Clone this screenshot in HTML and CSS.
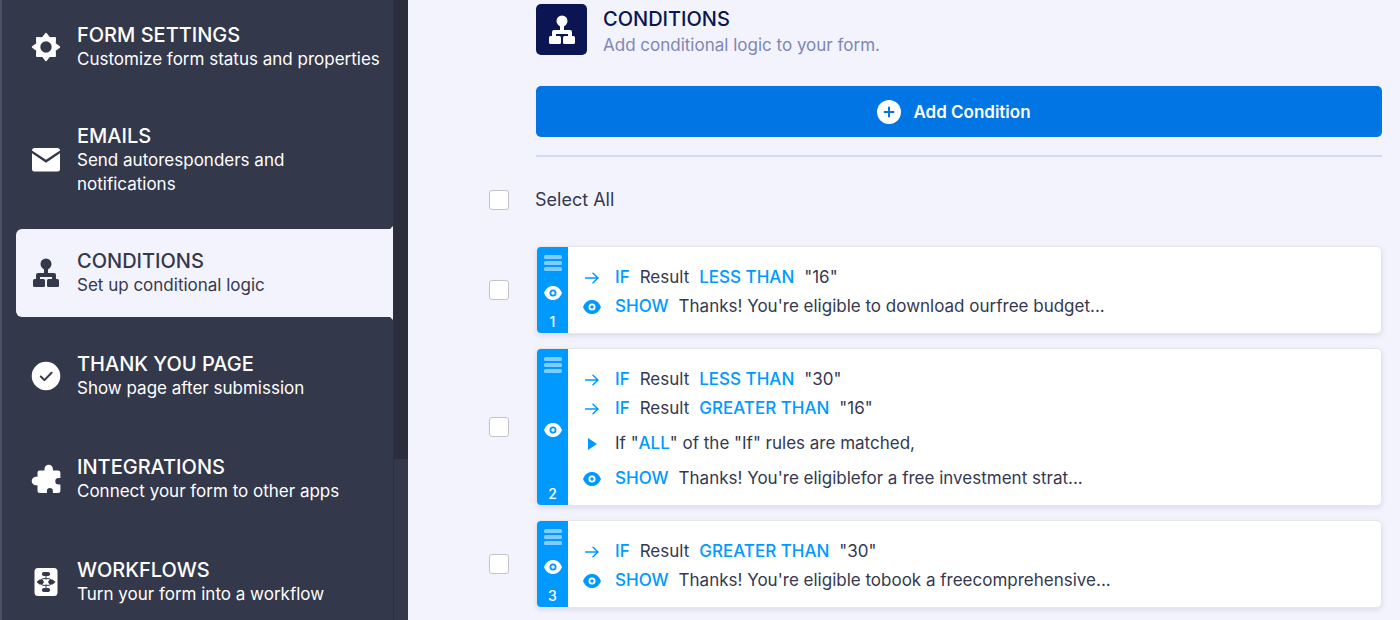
FILE: index.html
```
<!DOCTYPE html>
<html lang="en">
<head>
    <meta charset="UTF-8">
    <meta name="viewport" content="width=device-width, initial-scale=1.0">
    <title>Conditions</title>
    <link rel="stylesheet" href="styles.css">
</head>
<body>
    <!-- Shared icons -->
    <svg class="sprite" aria-hidden="true">
        <symbol id="icon-tree" viewBox="0 0 28 30">
            <circle cx="14" cy="6" r="5.5"/>
            <path d="M12 10h4v5h6a2 2 0 0 1 2 2v5h-4v-3H8v3H4v-5a2 2 0 0 1 2-2h6z"/>
            <rect x="1" y="21" width="12" height="8" rx="1.5"/>
            <rect x="15" y="21" width="12" height="8" rx="1.5"/>
        </symbol>
        <symbol id="icon-eye" viewBox="0 0 18 14">
            <path fill-rule="evenodd" d="M9 0C5 0 1.800 2.500 0 7c1.800 4.500 5 7 9 7s7.200-2.500 9-7c-1.800-4.500-5-7-9-7zm0 3.500a3.500 3.500 0 1 1 0 7 3.500 3.500 0 0 1 0-7z"/>
            <circle cx="9" cy="7" r="1.700"/>
        </symbol>
        <symbol id="icon-arrow" viewBox="0 0 14 12">
            <path d="M0.500 6h12M8 1.200l5 4.800-5 4.800" fill="none" stroke="currentColor" stroke-width="1.500" stroke-linecap="round" stroke-linejoin="round"/>
        </symbol>
        <symbol id="icon-menu" viewBox="0 0 18 16">
            <rect width="18" height="4" rx="1.500"/>
            <rect y="6" width="18" height="4" rx="1.500"/>
            <rect y="12" width="18" height="4" rx="1.500"/>
        </symbol>
    </svg>

    <div class="layout">
        <aside class="sidebar">
            <nav class="menu">
                <a class="menu-item" href="#settings">
                    <svg class="menu-icon" viewBox="0 0 30 30">
                        <path fill-rule="evenodd" d="M15 1.800L18.300 6.200L24 6L23.800 11.700L28.200 15L23.800 18.300L24 24L18.300 23.800L15 28.200L11.700 23.800L6 24L6.200 18.300L1.800 15L6.200 11.700L6 6L11.700 6.200zM15 8.300a6.700 6.700 0 1 0 0 13.400 6.700 6.700 0 0 0 0-13.400z" stroke="currentColor" stroke-width="2" stroke-linejoin="round"/>
                    </svg>
                    <span class="menu-text">
                        <span class="menu-title">FORM SETTINGS</span>
                        <span class="menu-desc">Customize form status and properties</span>
                    </span>
                </a>
                <a class="menu-item" href="#emails">
                    <svg class="menu-icon" viewBox="0 0 30 30">
                        <path d="M1 5.500C1 4 2 3 3.500 3h23C28 3 29 4 29 5.500L15 14.800z"/>
                        <path d="M1 8.200l14 9.500 14-9.500V24a2.500 2.500 0 0 1-2.500 2.500h-23A2.500 2.500 0 0 1 1 24z"/>
                    </svg>
                    <span class="menu-text">
                        <span class="menu-title">EMAILS</span>
                        <span class="menu-desc">Send autoresponders and notifications</span>
                    </span>
                </a>
                <a class="menu-item active" href="#conditions" aria-current="page">
                    <svg class="menu-icon"><use href="#icon-tree"/></svg>
                    <span class="menu-text">
                        <span class="menu-title">CONDITIONS</span>
                        <span class="menu-desc">Set up conditional logic</span>
                    </span>
                </a>
                <a class="menu-item" href="#thankyou">
                    <svg class="menu-icon" viewBox="0 0 30 30">
                        <circle cx="15" cy="15" r="14.300"/>
                        <path class="cut-line" d="M9.800 15.500l3.600 3.600 7.200-7.400"/>
                    </svg>
                    <span class="menu-text">
                        <span class="menu-title">THANK YOU PAGE</span>
                        <span class="menu-desc">Show page after submission</span>
                    </span>
                </a>
                <a class="menu-item" href="#integrations">
                    <svg class="menu-icon" viewBox="0 0 30 30">
                        <path d="M8.500 6.500h5V5a4.200 4.200 0 0 1 8.400 0v1.500h5a2.500 2.500 0 0 1 2.500 2.500v5h-1.800a3.300 3.300 0 0 0 0 6.600h1.800v5.900a2.500 2.500 0 0 1-2.500 2.500h-5v-2a3 3 0 0 0-6 0v2H9a2.500 2.500 0 0 1-2.500-2.500v-5.200H5A4.300 4.300 0 0 1 5 12.700h1.500V8.500a2 2 0 0 1 2-2z"/>
                    </svg>
                    <span class="menu-text">
                        <span class="menu-title">INTEGRATIONS</span>
                        <span class="menu-desc">Connect your form to other apps</span>
                    </span>
                </a>
                <a class="menu-item" href="#workflows">
                    <svg class="menu-icon" viewBox="0 0 30 30">
                        <rect x="3.500" y="1" width="23" height="28" rx="3.500"/>
                        <g class="cut">
                            <rect x="11" y="5" width="8" height="4" rx="1.800"/>
                            <rect x="11" y="21" width="8" height="4" rx="1.800"/>
                            <path d="M5.500 15l3-2.400h3l1.500 2.400-1.500 2.400h-3zM24.500 15l-3-2.400h-3L17 15l1.500 2.400h3z"/>
                        </g>
                        <path class="cut-thin" d="M15 9v3M15 18v3M10.500 12.500l1-.8h7l1 .8M10.500 17.500l1 .8h7l1-.8"/>
                    </svg>
                    <span class="menu-text">
                        <span class="menu-title">WORKFLOWS</span>
                        <span class="menu-desc">Turn your form into a workflow</span>
                    </span>
                </a>
            </nav>
            <div class="scroll-track"><div class="scroll-thumb"></div></div>
        </aside>

        <main class="content">
            <header class="page-header">
                <span class="page-icon"><svg><use href="#icon-tree"/></svg></span>
                <div>
                    <h1>CONDITIONS</h1>
                    <p>Add conditional logic to your form.</p>
                </div>
            </header>

            <div class="add-area">
                <button class="add-button" type="button">
                    <svg viewBox="0 0 24 24">
                        <circle cx="12" cy="12" r="12"/>
                        <path d="M12 7.500v9M7.500 12h9" stroke="#0075e3" stroke-width="2" stroke-linecap="round"/>
                    </svg>
                    Add Condition
                </button>
            </div>

            <div class="select-all">
                <input type="checkbox" id="selectAll">
                <label for="selectAll">Select All</label>
            </div>

            <ul class="conditions">
                <li class="condition">
                    <input type="checkbox" aria-label="Condition 1">
                    <div class="card">
                        <div class="handle">
                            <svg class="handle-menu"><use href="#icon-menu"/></svg>
                            <svg class="eye"><use href="#icon-eye"/></svg>
                            <span>1</span>
                        </div>
                        <div class="rules">
                            <div class="rule"><svg class="arrow"><use href="#icon-arrow"/></svg><b>IF</b><span>Result</span><b>LESS THAN</b><span>"16"</span></div>
                            <div class="rule"><svg class="eye"><use href="#icon-eye"/></svg><b>SHOW</b><span>Thanks! You're eligible to download ourfree budget...</span></div>
                        </div>
                    </div>
                </li>
                <li class="condition">
                    <input type="checkbox" aria-label="Condition 2">
                    <div class="card">
                        <div class="handle">
                            <svg class="handle-menu"><use href="#icon-menu"/></svg>
                            <svg class="eye"><use href="#icon-eye"/></svg>
                            <span>2</span>
                        </div>
                        <div class="rules">
                            <div class="rule"><svg class="arrow"><use href="#icon-arrow"/></svg><b>IF</b><span>Result</span><b>LESS THAN</b><span>"30"</span></div>
                            <div class="rule"><svg class="arrow"><use href="#icon-arrow"/></svg><b>IF</b><span>Result</span><b>GREATER THAN</b><span>"16"</span></div>
                            <div class="rule match"><svg class="play" viewBox="0 0 9 12"><path d="M0 0l9 6-9 6z"/></svg><span>If "<b>ALL</b>" of the "If" rules are matched,</span></div>
                            <div class="rule"><svg class="eye"><use href="#icon-eye"/></svg><b>SHOW</b><span>Thanks! You're eligiblefor a free investment strat...</span></div>
                        </div>
                    </div>
                </li>
                <li class="condition">
                    <input type="checkbox" aria-label="Condition 3">
                    <div class="card">
                        <div class="handle">
                            <svg class="handle-menu"><use href="#icon-menu"/></svg>
                            <svg class="eye"><use href="#icon-eye"/></svg>
                            <span>3</span>
                        </div>
                        <div class="rules">
                            <div class="rule"><svg class="arrow"><use href="#icon-arrow"/></svg><b>IF</b><span>Result</span><b>GREATER THAN</b><span>"30"</span></div>
                            <div class="rule"><svg class="eye"><use href="#icon-eye"/></svg><b>SHOW</b><span>Thanks! You're eligible tobook a freecomprehensive...</span></div>
                        </div>
                    </div>
                </li>
            </ul>
        </main>
    </div>
</body>
</html>
```
FILE: styles.css
```
* {
    box-sizing: border-box;
}
body {
    margin: 0;
    font-family: Inter, "Liberation Sans", sans-serif;
    background-color: #f3f3fe;
    color: #343850;
}
svg {
    fill: currentColor;
    flex-shrink: 0;
}
.sprite {
    display: none;
}
.layout {
    display: grid;
    grid-template-columns: 408px 1fr;
    height: 100vh;
    overflow: hidden;
}

/* Sidebar */
.sidebar {
    display: flex;
    min-height: 0;
    background-color: #33384b;
    border-left: 2px solid #4b5164;
}
.menu {
    flex: 1;
    display: flex;
    flex-direction: column;
    gap: 15px;
    padding: 3px 0 0 14px;
}
.menu-item {
    position: relative;
    display: flex;
    flex-shrink: 0;
    align-items: center;
    gap: 16px;
    min-height: 88px;
    padding: 18px 9px 18px 15px;
    color: #fff;
    text-decoration: none;
    border-radius: 6px 0 0 6px;
}
.menu-icon {
    width: 30px;
    height: 30px;
}
.menu-text {
    flex: 1;
}
.menu-title, .menu-desc {
    display: block;
    line-height: 24px;
}
.menu-title {
    font-size: 20px;
    font-weight: 500;
}
.menu-desc {
    font-size: 17px;
}
.menu-item.active {
    background-color: #f3f3fe;
    color: #33384b;
}
/* little flares where the active tab meets the edge */
.menu-item.active::before, .menu-item.active::after {
    content: "";
    position: absolute;
    right: 0;
    border-left: 3px solid transparent;
}
.menu-item.active::before {
    bottom: 100%;
    border-bottom: 3px solid #f3f3fe;
}
.menu-item.active::after {
    top: 100%;
    border-top: 3px solid #f3f3fe;
}
.cut {
    fill: #33384b;
}
.cut-line, .cut-thin {
    fill: none;
    stroke: #33384b;
    stroke-width: 2;
    stroke-linecap: round;
    stroke-linejoin: round;
}
.cut-thin {
    stroke-width: 1;
}
.scroll-track {
    width: 15px;
    border-left: 1px solid #2d3042;
}
.scroll-thumb {
    height: 74%;
    background-color: #2b2d3c;
}

/* Content */
.content {
    padding: 4px 18px 0 81px;
}
.page-header {
    display: flex;
    gap: 16px;
    margin-left: 47px;
}
.page-icon {
    display: flex;
    align-items: center;
    justify-content: center;
    width: 51px;
    height: 51px;
    border-radius: 5px;
    background-color: #0a1551;
    color: #fff;
}
.page-icon svg {
    width: 28px;
    height: 30px;
}
.page-header h1 {
    margin: 2px 0 0;
    font-size: 20px;
    font-weight: 500;
    line-height: 26px;
    color: #0a1551;
}
.page-header p {
    margin: 0;
    font-size: 17px;
    line-height: 26px;
    color: #7e86b5;
}
.add-area {
    margin-left: 47px;
    padding: 28px 0 18px;
    border-bottom: 2px solid #d3daf3;
}
.add-button {
    display: flex;
    align-items: center;
    justify-content: center;
    gap: 12px;
    width: 100%;
    height: 51px;
    padding: 0 10px 0 0;
    border: 0;
    border-radius: 5px;
    background-color: #0075e3;
    color: #fff;
    font-family: inherit;
    font-size: 17px;
    font-weight: 600;
}
.add-button svg {
    width: 24px;
    height: 24px;
}
input[type="checkbox"] {
    appearance: none;
    flex-shrink: 0;
    width: 20px;
    height: 20px;
    margin: 0;
    border: 1px solid #c3c3c8;
    border-radius: 3px;
    background-color: #fff;
}
input[type="checkbox"]:checked {
    background-color: #0099ff;
}
.select-all {
    display: flex;
    align-items: center;
    gap: 26px;
    padding: 31px 0 34px;
    font-size: 18px;
    line-height: 24px;
}
.conditions {
    display: flex;
    flex-direction: column;
    gap: 14px;
    margin: 0;
    padding: 0;
    list-style: none;
}
.condition {
    display: flex;
    align-items: center;
    gap: 27px;
}
.card {
    flex: 1;
    display: flex;
    overflow: hidden;
    border: 1px solid #e6e6e9;
    border-radius: 5px;
    background-color: #fff;
    box-shadow: 0 2px 5px rgba(60, 50, 80, 0.12);
}
.handle {
    display: flex;
    flex-direction: column;
    align-items: center;
    justify-content: space-between;
    width: 31px;
    padding: 8px 0 3px;
    background-color: #0099ff;
    color: #fff;
    font-size: 14px;
    font-weight: 500;
    line-height: 16px;
}
.handle-menu {
    width: 18px;
    height: 16px;
    color: #80ccff;
}
.eye {
    width: 18px;
    height: 14px;
}
.rules {
    flex: 1;
    padding: 16px 15px 12px;
}
.rule {
    display: flex;
    align-items: center;
    gap: 10px;
    font-size: 17px;
    line-height: 29px;
}
.rule svg {
    color: #0099ff;
}
.rule b {
    color: #0099ff;
    font-weight: 500;
}
.rule svg + * {
    margin-left: 4px;
}
.arrow {
    width: 14px;
    height: 12px;
    margin: 0 2px;
}
.play {
    width: 9px;
    height: 12px;
    margin: 0 4px 0 5px;
}
.match {
    padding: 6px 0;
}
```
